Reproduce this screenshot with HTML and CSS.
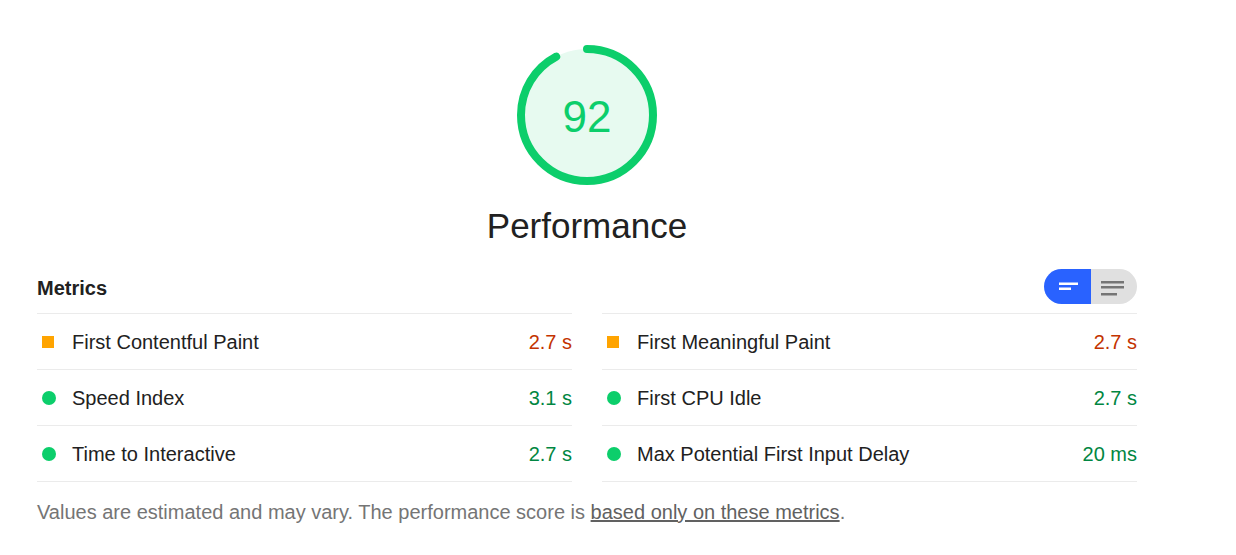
FILE: index.html
```html
<!DOCTYPE html>
<html lang="en">
<head>
<meta charset="utf-8">
<title>Performance</title>
<link rel="stylesheet" href="styles.css">
</head>
<body>
<div class="page">
  <div class="gauge-block">
    <div class="gauge">
      <svg class="gauge-svg" width="140" height="140" viewBox="0 0 140 140">
        <circle cx="70" cy="70" r="66" fill="#e7faf0" stroke="none"/>
        <circle cx="70" cy="70" r="66" fill="none" stroke="#0cce6b" stroke-width="8" stroke-linecap="round" stroke-dasharray="382 500" transform="rotate(-90 70 70)"/>
      </svg>
      <div class="gauge-value">92</div>
    </div>
    <div class="gauge-title">Performance</div>
  </div>

  <div class="metrics-header">
    <div class="metrics-title">Metrics</div>
    <div class="toggle">
      <div class="toggle-half toggle-on">
        <svg width="24" height="24" viewBox="0 0 24 24"><rect x="3" y="7.5" width="19" height="2.5" fill="#fff"/><rect x="3" y="12.5" width="12" height="2.5" fill="#fff"/></svg>
      </div>
      <div class="toggle-half toggle-off">
        <svg width="24" height="24" viewBox="0 0 24 24"><rect x="0" y="6" width="23" height="2.5" fill="#757575"/><rect x="0" y="11" width="23" height="2.5" fill="#757575"/><rect x="0" y="18" width="16" height="2.5" fill="#757575"/></svg>
      </div>
    </div>
  </div>

  <div class="metrics-grid">
    <div class="metric first"><span class="icon square"></span><span class="name">First Contentful Paint</span><span class="value avg">2.7 s</span></div>
    <div class="metric first"><span class="icon square"></span><span class="name">First Meaningful Paint</span><span class="value avg">2.7 s</span></div>
    <div class="metric"><span class="icon dot"></span><span class="name">Speed Index</span><span class="value pass">3.1 s</span></div>
    <div class="metric"><span class="icon dot"></span><span class="name">First CPU Idle</span><span class="value pass">2.7 s</span></div>
    <div class="metric"><span class="icon dot"></span><span class="name">Time to Interactive</span><span class="value pass">2.7 s</span></div>
    <div class="metric"><span class="icon dot"></span><span class="name">Max Potential First Input Delay</span><span class="value pass">20 ms</span></div>
  </div>

  <p class="footnote">Values are estimated and may vary. The performance score is <a href="#">based only on these metrics</a>.</p>
</div>
</body>
</html>
```

FILE: styles.css
```css
html, body {
  margin: 0;
  padding: 0;
  background: #ffffff;
}
body {
  font-family: "Liberation Sans", Arial, sans-serif;
  font-size: 20px;
  color: #212121;
}
.page {
  width: 1100px;
  padding: 45px 0 0 37px;
}
.gauge-block {
  display: flex;
  flex-direction: column;
  align-items: center;
}
.gauge {
  display: grid;
  width: 140px;
  height: 140px;
}
.gauge-svg, .gauge-value {
  grid-area: 1 / 1;
}
.gauge-svg {
  display: block;
}
.gauge-value {
  display: flex;
  align-items: center;
  justify-content: center;
  font-size: 44px;
  color: #0cce6b;
  padding-top: 3px;
}
.gauge-title {
  margin-top: 21px;
  font-size: 35px;
  line-height: 40px;
}
.metrics-header {
  margin-top: 23px;
  display: flex;
  align-items: center;
  justify-content: space-between;
  padding-bottom: 9px;
}
.metrics-title {
  font-weight: bold;
  font-size: 20px;
  padding-top: 3px;
}
.toggle {
  display: flex;
  width: 93px;
  height: 35px;
  border-radius: 18px;
  overflow: hidden;
}
.toggle-half {
  flex: 1;
  display: flex;
  align-items: center;
  justify-content: center;
}
.toggle-on {
  background: #2962ff;
}
.toggle-off {
  background: #e0e0e0;
}
.toggle-on svg {
  margin-left: 2px;
}
.toggle-off svg {
  margin-right: 2px;
}
.metrics-grid {
  display: grid;
  grid-template-columns: 535px 535px;
  column-gap: 30px;
}
.metric {
  display: flex;
  align-items: center;
  height: 55px;
  padding-top: 1px;
  box-sizing: border-box;
  border-bottom: 1px solid #ebebeb;
}
.metric.first {
  border-top: 1px solid #ebebeb;
  height: 57px;
}
.metric:not(.first) {
  height: 56px;
}
.icon {
  flex: none;
  margin-left: 5px;
  margin-right: 18px;
}
.square {
  width: 12px;
  height: 12px;
  background: #ffa400;
  margin-right: 18px;
}
.dot {
  width: 14px;
  height: 14px;
  border-radius: 50%;
  background: #0cce6b;
  margin-right: 16px;
}
.name {
  flex: 1;
}
.value {
  text-align: right;
}
.value.avg {
  color: #c33300;
}
.value.pass {
  color: #018642;
}
.footnote {
  margin: 18px 0 0 0;
  color: #757575;
  font-size: 20px;
  line-height: 24px;
}
.footnote a {
  color: #616161;
  text-decoration: underline;
}
```
